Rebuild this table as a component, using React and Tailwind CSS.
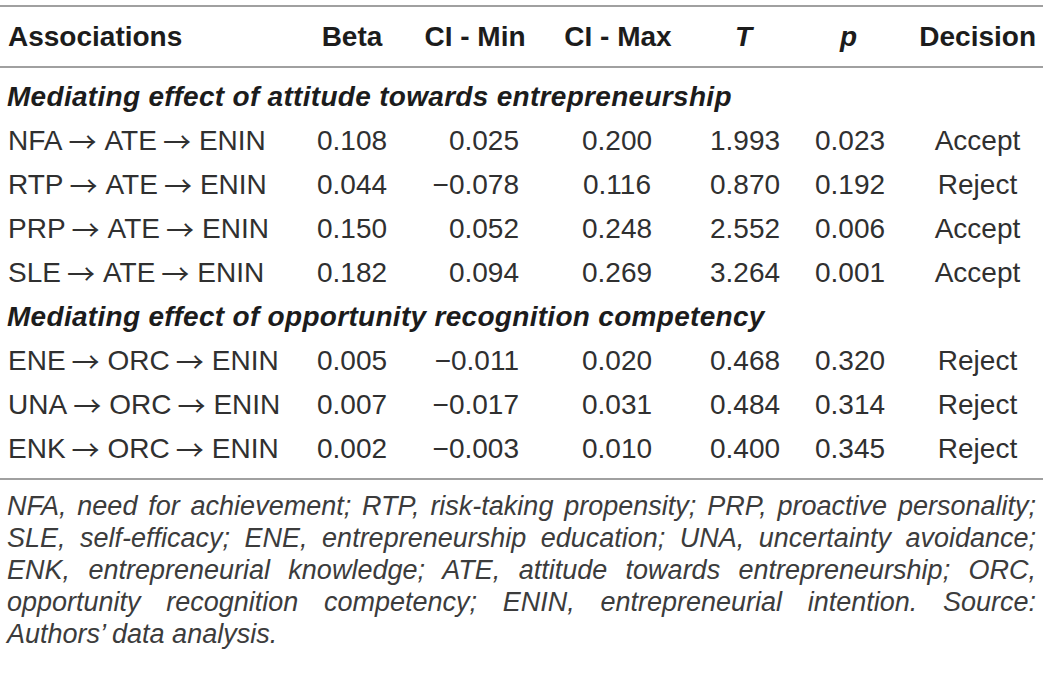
import React from 'react';

const sections = [
  {
    title: 'Mediating effect of attitude towards entrepreneurship',
    rows: [
      [['NFA', 'ATE', 'ENIN'], '0.108', '0.025', '0.200', '1.993', '0.023', 'Accept'],
      [['RTP', 'ATE', 'ENIN'], '0.044', '−0.078', '0.116', '0.870', '0.192', 'Reject'],
      [['PRP', 'ATE', 'ENIN'], '0.150', '0.052', '0.248', '2.552', '0.006', 'Accept'],
      [['SLE', 'ATE', 'ENIN'], '0.182', '0.094', '0.269', '3.264', '0.001', 'Accept'],
    ],
  },
  {
    title: 'Mediating effect of opportunity recognition competency',
    rows: [
      [['ENE', 'ORC', 'ENIN'], '0.005', '−0.011', '0.020', '0.468', '0.320', 'Reject'],
      [['UNA', 'ORC', 'ENIN'], '0.007', '−0.017', '0.031', '0.484', '0.314', 'Reject'],
      [['ENK', 'ORC', 'ENIN'], '0.002', '−0.003', '0.010', '0.400', '0.345', 'Reject'],
    ],
  },
];

const footLines = [
  'NFA, need for achievement; RTP, risk-taking propensity; PRP, proactive personality;',
  'SLE, self-efficacy; ENE, entrepreneurship education; UNA, uncertainty avoidance;',
  'ENK, entrepreneurial knowledge; ATE, attitude towards entrepreneurship; ORC,',
  'opportunity recognition competency; ENIN, entrepreneurial intention. Source:',
];

const cols = 'grid grid-cols-[300px_104px_142px_144px_104px_106px_143px] items-center';

const Arrow = () => (
  <span className="font-['Noto_Sans_CJK_JP',sans-serif] text-[28px] ml-[6px] mr-[8px]">→</span>
);

const App = () => {
  return (
    <div className="w-[1043px] h-[673px] bg-white text-[#303030] font-['Liberation_Sans',Arial,sans-serif] pt-[5px]">
      <div className="border-t-2 border-[#a0a0a0]" />
      <div className={`${cols} h-[59px] text-[28px] font-bold text-[#1c1c1c]`}>
        <div className="pl-[8px]">Associations</div>
        <div className="text-center">Beta</div>
        <div className="text-center">CI - Min</div>
        <div className="text-center">CI - Max</div>
        <div className="text-center italic pl-[3px]">T</div>
        <div className="text-center italic pl-[3px]">p</div>
        <div className="text-right pr-[7px]">Decision</div>
      </div>
      <div className="border-t-2 border-[#a0a0a0]" />

      {sections.map((sec, si) => (
        <div key={si}>
          <div
            className={`flex items-end pl-[7px] text-[28px] font-bold italic text-[#1c1c1c] ${
              si === 0 ? 'h-[51px]' : 'h-[44px]'
            }`}
          >
            <div className="leading-[44px] tracking-[0.3px]">{sec.title}</div>
          </div>
          {sec.rows.map((r, ri) => (
            <div key={ri} className={`${cols} h-[44px] text-[28px] leading-[44px]`}>
              <div className="pl-[8px] whitespace-nowrap flex items-center">
                <span>{r[0][0]}</span>
                <Arrow />
                <span>{r[0][1]}</span>
                <Arrow />
                <span>{r[0][2]}</span>
              </div>
              <div className="text-center">{r[1]}</div>
              <div className="text-right pr-[27px]">{r[2]}</div>
              <div className="text-center pr-[2px]">{r[3]}</div>
              <div className="text-center pl-[6px]">{r[4]}</div>
              <div className="text-center pl-[6px]">{r[5]}</div>
              <div className="text-center pl-[12px]">{r[6]}</div>
            </div>
          ))}
        </div>
      ))}

      <div className="h-[7px]" />
      <div className="border-t-2 border-[#a0a0a0]" />

      <div className="pt-[10px] pl-[7px] pr-[7px] italic text-[27px] leading-[32px] text-[#3c3c3c]">
        {footLines.map((l, i) => (
          <div key={i} className="text-justify [text-align-last:justify] whitespace-nowrap">
            {l}
          </div>
        ))}
        <div>Authors’ data analysis.</div>
      </div>
    </div>
  );
};

export default App;
